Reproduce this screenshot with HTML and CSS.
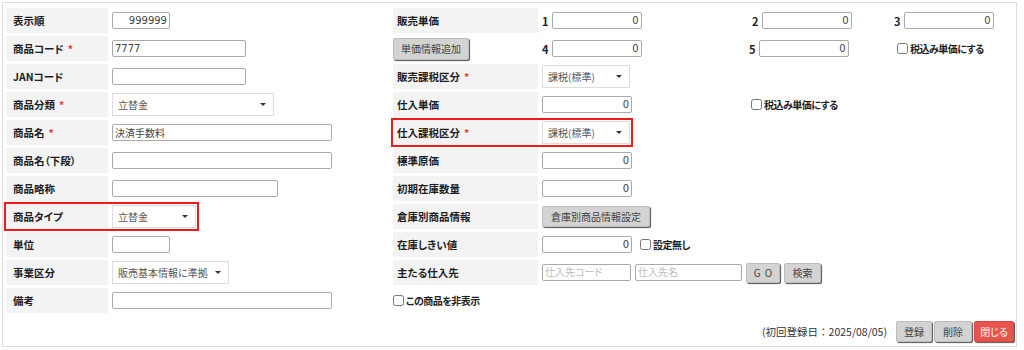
FILE: index.html
```html
<!DOCTYPE html>
<html lang="ja">
<head>
    <meta charset="UTF-8">
    <meta name="viewport" content="width=device-width, initial-scale=1.0">
    <title>商品登録</title>
    <link rel="stylesheet" href="styles.css">
</head>
<body>
    <div class="panel">
        <div class="columns">
            <div class="col col-left">
                <div class="row">
                    <div class="label">表示順</div>
                    <input class="text w58 num" value="999999">
                </div>
                <div class="row">
                    <div class="label">商品コード<span class="req">*</span></div>
                    <input class="text w134" value="7777">
                </div>
                <div class="row">
                    <div class="label">JANコード</div>
                    <input class="text w134">
                </div>
                <div class="row">
                    <div class="label">商品分類<span class="req">*</span></div>
                    <div class="dropdown w162"><span>立替金</span><span class="caret"></span></div>
                </div>
                <div class="row">
                    <div class="label">商品名<span class="req">*</span></div>
                    <input class="text w220" value="決済手数料">
                </div>
                <div class="row">
                    <div class="label">商品名（下段）</div>
                    <input class="text w220">
                </div>
                <div class="row">
                    <div class="label">商品略称</div>
                    <input class="text w166">
                </div>
                <div class="row marked">
                    <div class="label">商品タイプ</div>
                    <div class="dropdown w84"><span>立替金</span><span class="caret"></span></div>
                </div>
                <div class="row">
                    <div class="label">単位</div>
                    <input class="text w58">
                </div>
                <div class="row">
                    <div class="label">事業区分</div>
                    <div class="dropdown w117"><span>販売基本情報に準拠</span><span class="caret"></span></div>
                </div>
                <div class="row">
                    <div class="label">備考</div>
                    <input class="text w220">
                </div>
            </div>

            <div class="col col-right">
                <div class="row">
                    <div class="label">販売単価</div>
                    <div class="prices">
                        <div class="price"><b>1</b><input class="text w90 num" value="0"></div>
                        <div class="price shift"><b>2</b><input class="text w90 num" value="0"></div>
                        <div class="price"><b>3</b><input class="text w90 num" value="0"></div>
                    </div>
                </div>
                <div class="row">
                    <div class="label plain"><button class="btn btn-tall">単価情報追加</button></div>
                    <div class="prices">
                        <div class="price"><b>4</b><input class="text w90 num" value="0"></div>
                        <div class="price"><b>5</b><input class="text w90 num" value="0"></div>
                        <label class="check shift"><input type="checkbox">税込み単価にする</label>
                    </div>
                </div>
                <div class="row">
                    <div class="label">販売課税区分<span class="req">*</span></div>
                    <div class="dropdown w88"><span>課税(標準)</span><span class="caret"></span></div>
                </div>
                <div class="row">
                    <div class="label">仕入単価</div>
                    <div class="prices">
                        <input class="text w90 num" value="0">
                        <label class="check shift-sm"><input type="checkbox">税込み単価にする</label>
                    </div>
                </div>
                <div class="row marked">
                    <div class="label">仕入課税区分<span class="req">*</span></div>
                    <div class="dropdown w88"><span>課税(標準)</span><span class="caret"></span></div>
                </div>
                <div class="row">
                    <div class="label">標準原価</div>
                    <input class="text w90 num" value="0">
                </div>
                <div class="row">
                    <div class="label">初期在庫数量</div>
                    <input class="text w90 num" value="0">
                </div>
                <div class="row">
                    <div class="label">倉庫別商品情報</div>
                    <button class="btn">倉庫別商品情報設定</button>
                </div>
                <div class="row">
                    <div class="label">在庫しきい値</div>
                    <input class="text w90 num" value="0">
                    <label class="check"><input type="checkbox">設定無し</label>
                </div>
                <div class="row">
                    <div class="label">主たる仕入先</div>
                    <input class="text w89" placeholder="仕入先コード">
                    <input class="text w107" placeholder="仕入先名">
                    <button class="btn btn-go">GO</button>
                    <button class="btn btn-search">検索</button>
                </div>
                <div class="row">
                    <label class="check"><input type="checkbox">この商品を非表示</label>
                </div>
            </div>
        </div>

        <div class="footer">
            <span class="stamp">(初回登録日：2025/08/05)</span>
            <button class="btn btn-foot w36">登録</button>
            <button class="btn btn-foot w38">削除</button>
            <button class="btn btn-foot btn-danger w40">閉じる</button>
        </div>
    </div>
</body>
</html>
```

FILE: styles.css
```css
* {
    box-sizing: border-box;
}
body {
    margin: 2px;
    font-family: "Noto Sans CJK JP", sans-serif;
    font-size: 10px;
    font-feature-settings: "palt";
    color: #333;
    background-color: #fff;
}
.panel {
    width: 1015px;
    height: 345px;
    border: 1px solid #ddd;
    padding: 5px 2px 4px 3px;
}
.columns {
    display: flex;
}
.col {
    display: flex;
    flex-direction: column;
    gap: 3px;
}
.col-left {
    width: 387px;
}
.col-right {
    flex: 1;
}
.row {
    display: flex;
    align-items: center;
    gap: 4px;
    height: 25px;
}
.label {
    align-self: stretch;
    display: flex;
    align-items: center;
    background-color: #f3f3f3;
    font-size: 10.5px;
    font-weight: bold;
    color: #1e1e1e;
}
.col-left .label {
    width: 102px;
    padding-left: 7px;
}
.col-right .label {
    width: 145px;
    padding-left: 4px;
}
.label.plain {
    background: none;
    padding-left: 0;
}
.req {
    color: #e53935;
    margin-left: 4px;
}
.marked {
    width: fit-content;
    padding-right: 1px;
    outline: 2px solid #ee1b1b;
}

/* inputs */
.text {
    height: 17px;
    margin: 0;
    padding: 0 2px;
    border: 1px solid #aaa;
    border-radius: 2px;
    font: 10px "DejaVu Sans", "Noto Sans CJK JP", sans-serif;
    font-feature-settings: "palt";
    color: #444;
    background: #fff;
}
.text::placeholder {
    color: #bbb;
}
.num {
    text-align: right;
}
.w36 { width: 36px; }
.w38 { width: 38px; }
.w40 { width: 40px; }
.w58 { width: 58px; }
.w84 { width: 84px; }
.w88 { width: 88px; }
.w89 { width: 89px; }
.w90 { width: 90px; }
.w107 { width: 107px; }
.w117 { width: 117px; }
.w134 { width: 134px; }
.w162 { width: 162px; }
.w166 { width: 166px; }
.w220 { width: 220px; }

.dropdown {
    height: 23px;
    display: flex;
    align-items: center;
    justify-content: space-between;
    padding: 0 7px 0 5px;
    border: 1px solid #ddd;
    background: #fff;
    color: #555;
}
.caret {
    width: 0;
    height: 0;
    border-top: 3px solid #333;
    border-left: 3px solid transparent;
    border-right: 3px solid transparent;
}

/* price grid */
.prices {
    display: grid;
    grid-template-columns: 207px 145px auto;
    align-items: center;
}
.price {
    display: flex;
    align-items: center;
    gap: 3px;
}
.price b {
    font-size: 11px;
    color: #222;
}
.shift {
    margin-left: 3px;
}
.shift-sm {
    margin-left: 2px;
}

.check {
    display: flex;
    align-items: center;
    font-weight: bold;
    letter-spacing: -0.5px;
    color: #1e1e1e;
}
.check input {
    width: 11px;
    height: 11px;
    margin: 0 2px 0 0;
}
.row > .text + .check {
    margin-left: 4px;
}

/* buttons */
.btn {
    height: 21px;
    padding: 0 8px;
    border: 1px solid #bdbdbd;
    border-radius: 2px;
    background-color: #d3d3d3;
    box-shadow: 1px 1px 1px #555;
    font: 10px "Noto Sans CJK JP", sans-serif;
    font-feature-settings: "palt";
    color: #444;
}
.btn-tall {
    height: 22px;
    padding: 0 7px;
}
.btn-go {
    width: 34px;
    height: 20px;
    padding: 0;
    letter-spacing: 4px;
    text-indent: 4px;
}
.btn-search {
    width: 37px;
    height: 20px;
    padding: 0;
}
.btn-foot {
    padding: 0;
}
.btn-danger {
    background-color: #e8554e;
    border-color: #e0463f;
    color: #fff;
}

.footer {
    display: flex;
    justify-content: flex-end;
    align-items: center;
    gap: 2px;
    margin-top: 8px;
}
.stamp {
    margin-right: 7px;
    font-size: 10.5px;
    font-feature-settings: normal;
}
```
